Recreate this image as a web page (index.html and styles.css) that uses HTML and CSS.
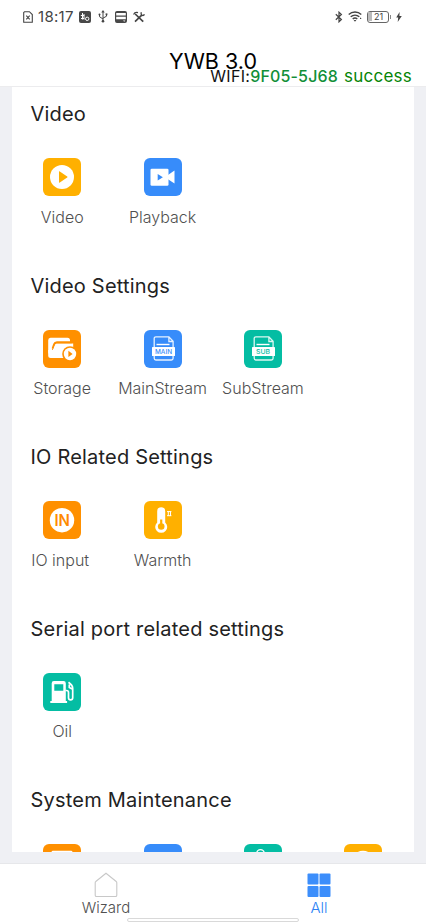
FILE: index.html
```html
<!DOCTYPE html>
<html lang="en">
<head>
<meta charset="utf-8">
<meta name="viewport" content="width=device-width, initial-scale=1">
<title>YWB 3.0</title>
<link rel="stylesheet" href="styles.css">
</head>
<body>
<div class="app">
  <header class="top">
    <div class="status">
      <svg class="s-sim" width="10" height="12" viewBox="0 0 10 12" fill="none" stroke="#444" stroke-width="1.1"><path d="M1.600.7h4.800l2.900 2.800v7.800H.7V1.600z"/><path d="M3.300 4.600l3.400 3.800M6.700 4.600l-3.400 3.800"/></svg>
      <span class="time">18:17</span>
      <svg class="s-app" width="12" height="12" viewBox="0 0 12 12"><rect width="12" height="12" rx="2" fill="#484848"/><path d="M3.500 2v6.500M1.800 4.500h3.400M5 3v5.500M2 7.500h3" stroke="#fff" fill="none"/><circle cx="8.200" cy="7.800" r="1.700" stroke="#fff" fill="none"/></svg>
      <svg class="s-usb" width="10" height="13" viewBox="0 0 10 13" fill="none" stroke="#444"><path d="M5 2v9M1.500 4.500v2.200L5 9M8.500 4v2.200L5 8.200"/><path d="M5 0l1.700 2.500H3.300z" fill="#444" stroke="none"/><circle cx="5" cy="11.300" r="1.300" fill="#444" stroke="none"/><circle cx="1.500" cy="4.400" r="1" fill="#444" stroke="none"/><path d="M7.600 3.400h1.800v1.800H7.600z" fill="#444" stroke="none"/></svg>
      <svg class="s-card" width="12" height="12" viewBox="0 0 12 12"><path d="M2 .6h8A1.400 1.400 0 0 1 11.400 2v8a1.400 1.400 0 0 1-1.400 1.400H2A1.400 1.400 0 0 1 .6 10V2A1.400 1.400 0 0 1 2 .6z" fill="#fff" stroke="#484848" stroke-width="1.200"/><path d="M.6 5.200h10.800M.6 8.800h10.800" stroke="#484848" stroke-width="1.300"/><path d="M1 9h10v2H1zM1 1h10v1H1z" fill="#484848"/><path d="M8 9.400h2.400L9.200 10.800z" fill="#fff"/></svg>
      <svg class="s-tool" width="12" height="12" viewBox="0 0 12 12" fill="none" stroke="#444"><path d="M2.200 3l8 7.600" stroke-width="1.700"/><path d="M9 3.800L2 10.600" stroke-width="1.700"/><path d="M.5 3.600C1.500 1.400 3 1 5 1.600M8.400 1.300c-.7 1.600 0 3 1.500 3.200.8 0 1.300-.5 1.500-1.200" stroke-width="1.300"/></svg>
      <span class="grow"></span>
      <svg class="s-bt" width="8" height="12" viewBox="0 0 8 12" fill="none" stroke="#444" stroke-width="1.200"><path d="M.8 3.200l5.600 5.300L4 10.800V1.200l2.400 2.200L.8 8.800"/></svg>
      <svg class="s-wifi" width="15" height="11" viewBox="0 0 15 11" fill="none" stroke="#444" stroke-width="1.400"><path d="M.7 3.400c3.600-3.300 9-3.300 12.600 0M2.700 5.800c2.500-2.200 6.100-2.200 8.600 0M4.700 8c1.400-1.200 3.200-1.200 4.600 0"/><path d="M5.600 9l1.400 1.800L8.400 9zM12 6.200l1.700 1.900H12z" fill="#444" stroke="none"/></svg>
      <span class="battery"><i></i><b>21</b></span>
      <svg class="s-bolt" width="6" height="10" viewBox="0 0 6 10"><path d="M3.600 0L.2 5.500h2L1.700 10 5.800 4.100H3.400z" fill="#444"/></svg>
    </div>
    <h1 class="title">YWB 3.0</h1>
    <p class="wifi"><span class="wifi-key">WIFI:</span><span class="wifi-id">9F05-5J68</span><span class="wifi-state">success</span></p>
  </header>

  <main class="page">
    <div class="sheet">
      <section class="group">
        <h2>Video</h2>
        <div class="grid">
          <div class="item"><span class="tile amber"><svg viewBox="0 0 38 38"><circle cx="19" cy="19" r="12" fill="#fff"/><path d="M16 13.800v10.400a.5.5 0 0 0 .8.4l7.400-5.100a.6.6 0 0 0 0-1l-7.400-5.100a.5.5 0 0 0-.8.4z" fill="#ffb000"/></svg></span><span class="label">Video</span></div>
          <div class="item"><span class="tile blue"><svg viewBox="0 0 38 38"><rect x="6.500" y="10.700" width="18" height="17" rx="1.300" fill="#fff"/><path d="M24 17l6.500-4.400v12.800L24 21.300z" fill="#fff"/><path d="M13.700 16v6.600l5.200-3.300z" fill="#378cfa"/></svg></span><span class="label">Playback</span></div>
        </div>
      </section>
      <section class="group">
        <h2>Video Settings</h2>
        <div class="grid">
          <div class="item"><span class="tile orange"><svg viewBox="0 0 38 38"><path d="M7.500 7.700h17a2.500 2.500 0 0 1 2.500 2.500v1.400H14.300c-1.800 0-2.600.8-3.200 2.400L7.200 24.500c-1-.4-2-1-2-2.500V10.200a2.500 2.500 0 0 1 2.300-2.500z" fill="#fff"/><path d="M14.500 13.500h15.700v6L21 28H9.300c-1.700 0-2.300-.9-1.800-2.400l4-10.200c.5-1.300 1.400-1.900 3-1.900z" fill="#fff"/><path d="M5.200 22v3.500a2.500 2.500 0 0 0 2.500 2.500H12V20H5.200z" fill="#fff"/><path d="M9.500 18.500l1.600-4.300c.5-1.200 1.400-1.800 2.700-1.800h15" fill="none" stroke="#ff9000" stroke-width="1.800"/><circle cx="27" cy="24" r="7.800" fill="#ff9000"/><circle cx="27" cy="24" r="6.200" fill="#fff"/><path d="M25.400 20.800v6.200l4.200-3.100z" fill="#ff9000"/></svg></span><span class="label">Storage</span></div>
          <div class="item"><span class="tile blue"><svg viewBox="0 0 38 38"><path d="M10.200 17V8.500a1.700 1.700 0 0 1 1.700-1.700h13l4.200 4.500V17M10.200 25v3.300a1.700 1.700 0 0 0 1.700 1.700h15.500a1.700 1.700 0 0 0 1.700-1.700V25M24.900 7v4.500h4" fill="none" stroke="#e6f1ff" stroke-width="1.300"/><path d="M12.500 14.500h13" stroke="#fff" stroke-width="1.400"/><rect x="8" y="17" width="23" height="9" rx=".6" fill="#fff"/><text class="doc-tag" x="19.500" y="24" fill="#378cfa" textLength="17" lengthAdjust="spacingAndGlyphs">MAIN</text></svg></span><span class="label">MainStream</span></div>
          <div class="item"><span class="tile teal"><svg viewBox="0 0 38 38"><path d="M10.200 17V8.500a1.700 1.700 0 0 1 1.700-1.700h13l4.200 4.500V17M10.200 25v3.300a1.700 1.700 0 0 0 1.700 1.700h15.500a1.700 1.700 0 0 0 1.700-1.700V25M24.900 7v4.500h4" fill="none" stroke="#dcf7f2" stroke-width="1.300"/><path d="M12.500 14.500h13" stroke="#fff" stroke-width="1.400"/><rect x="8" y="17" width="23" height="9" rx=".6" fill="#fff"/><text class="doc-tag" x="19" y="24" fill="#04bda3" textLength="14" lengthAdjust="spacingAndGlyphs">SUB</text></svg></span><span class="label">SubStream</span></div>
        </div>
      </section>
      <section class="group">
        <h2>IO Related Settings</h2>
        <div class="grid">
          <div class="item"><span class="tile orange"><svg viewBox="0 0 38 38"><circle cx="19" cy="19.200" r="12.200" fill="#fff"/><text class="in-tag" x="19.200" y="25" fill="#ff8a00" textLength="15.500" lengthAdjust="spacingAndGlyphs">IN</text></svg></span><span class="label io">IO input</span></div>
          <div class="item"><span class="tile amber"><svg viewBox="0 0 38 38"><path d="M13.200 10.200a4 4 0 0 1 8 0v11.200a6 6 0 1 1-8 0z" fill="#fff"/><path d="M17.200 18.500v6.500" stroke="#ffb000" stroke-width="2.200"/><circle cx="17.200" cy="25.500" r="3.300" fill="#ffb000"/><path d="M23 10.600h4.400M23 14.700h4.400M24.300 10.500v4.500M26.500 10.500v4.500" stroke="#fff" stroke-width="1"/></svg></span><span class="label">Warmth</span></div>
        </div>
      </section>
      <section class="group">
        <h2>Serial port related settings</h2>
        <div class="grid">
          <div class="item"><span class="tile teal"><svg viewBox="0 0 38 38"><path d="M8.700 28V10.200A2.200 2.200 0 0 1 10.900 8h9.700a2.200 2.200 0 0 1 2.200 2.200V28h1.300v2H7.300v-2zM11.300 11.200v6.500h9v-6.500z" fill="#fff" fill-rule="evenodd"/><path d="M22.500 17.500h1c1.400 0 2 .7 2 2v5.300c0 2.800 4.200 2.800 4.200 0v-9.600c0-2.200-1.500-4-4.200-6M26.300 11.500v3l3 1.500" fill="none" stroke="#fff" stroke-width="1.700"/></svg></span><span class="label">Oil</span></div>
        </div>
      </section>
      <section class="group">
        <h2>System Maintenance</h2>
        <div class="grid">
          <div class="item"><span class="tile orange"><svg viewBox="0 0 38 38"><rect x="8.500" y="6.700" width="21" height="22" rx="1.500" fill="#fff"/></svg></span></div>
          <div class="item"><span class="tile blue"></span></div>
          <div class="item"><span class="tile teal"><svg viewBox="0 0 38 38"><circle cx="16.500" cy="9.500" r="3.800" fill="none" stroke="#fff" stroke-width="1.300"/></svg></span></div>
          <div class="item"><span class="tile amber"><svg viewBox="0 0 38 38"><circle cx="19" cy="18.500" r="11.700" fill="#fff"/></svg></span></div>
        </div>
      </section>
    </div>
  </main>

  <nav class="tabs">
    <div class="tab"><svg width="24" height="26" viewBox="0 0 24 26" fill="none" stroke="#c8c8c8" stroke-width="1.100"><path d="M12 1.200L1.800 9.500a1.500 1.500 0 0 0-.6 1.200v12.500A1.300 1.300 0 0 0 2.500 24.500h19a1.300 1.300 0 0 0 1.300-1.300V10.700a1.500 1.500 0 0 0-.6-1.200z"/></svg><span>Wizard</span></div>
    <div class="tab active"><svg width="24" height="26" viewBox="0 0 24 26" fill="#3c8efb"><rect x=".5" y="1.500" width="11" height="11" rx="1"/><rect x="12.500" y="1.500" width="11" height="11" rx="1"/><rect x=".5" y="14" width="11" height="11" rx="1"/><rect x="12.500" y="14" width="11" height="11" rx="1"/></svg><span>All</span></div>
    <i class="gesture"></i>
  </nav>
</div>
</body>
</html>
```
FILE: styles.css
```css
* { box-sizing: border-box; }
body { margin: 0; background: #fff; font-family: Inter, "Noto Sans", sans-serif; }
h1, h2, p { margin: 0; }
svg { display: block; flex: none; }
.app { height: 923px; display: flex; flex-direction: column; overflow: hidden; }

.top { height: 87px; flex: none; border-bottom: 1px solid #ececee; position: relative; }
.status { height: 33px; padding: 0 24px 0 23px; display: flex; align-items: center; color: #444; }
.time { font-size: 15px; line-height: 18px; margin: 0 4px 0 5px; letter-spacing: .3px; white-space: nowrap; width: 37px; }
.s-usb { margin-left: 7px; }
.s-card { margin-left: 7px; }
.s-tool { margin-left: 6px; }
.grow { flex: 1; }
.s-wifi { margin-left: 5px; }
.battery { width: 22px; height: 12px; margin-left: 4px; border: 1px solid #666; border-radius: 3px; display: flex; align-items: center; position: relative; }
.battery i { width: 4px; height: 9px; background: #bbb; }
.battery b { font-size: 9px; line-height: 10px; font-weight: 400; margin-left: 2px; }
.battery::after { content: ""; position: absolute; right: -3px; top: 3px; width: 1px; height: 4px; background: #888; }
.s-bolt { margin-left: 7px; }
.title { text-align: center; font-size: 21.5px; line-height: 28px; margin-top: 14px; font-weight: 400; color: #000; }
.wifi { position: absolute; right: 14px; top: 66px; display: flex; font-size: 16px; line-height: 20px; }
.wifi-key { color: #111; letter-spacing: .3px; }
.wifi-id { color: #128f38; font-weight: 500; letter-spacing: .15px; }
.wifi-state { color: #078507; margin-left: 6px; font-size: 17px; letter-spacing: .25px; }

.page { flex: 1; min-height: 0; background: #eff0f4; padding: 0 12px 11px; }
.sheet { height: 100%; background: #fff; overflow: hidden; }
.group { height: 171.600px; padding-top: 14px; }
.group h2 { font-size: 20px; line-height: 26px; font-weight: 400; letter-spacing: .2px; color: #222; padding-left: 18.500px; white-space: nowrap; }
.grid { display: grid; grid-template-columns: repeat(4, 100.400px); margin-top: 31px; }
.item { display: flex; flex-direction: column; align-items: center; }
.tile { width: 38px; height: 38px; border-radius: 6px; }
.amber { background: #ffb000; }
.blue { background: #378cfa; }
.orange { background: #ff9000; }
.teal { background: #04bda3; }
.label { font-size: 16px; line-height: 20px; margin-top: 10.500px; color: #505050; font-weight: 300; white-space: nowrap; }
.io { margin-right: 4px; }
.doc-tag { font: 500 6.500px Inter, sans-serif; text-anchor: middle; }
.in-tag { font: 600 16px Inter, sans-serif; text-anchor: middle; }

.tabs { height: 60px; flex: none; border-top: 1px solid #e6e7ea; display: grid; grid-template-columns: 1fr 1fr; position: relative; }
.tab { display: flex; flex-direction: column; align-items: center; padding-top: 8px; font-size: 15px; line-height: 20px; color: #505050; font-weight: 300; }
.tab span { margin-left: -1px; }
.tab svg { margin-left: -1px; }
.tab.active { color: #2c82f5; }
.gesture { position: absolute; left: 127px; bottom: 1px; width: 172px; height: 4px; border: 1px solid #d9d9d9; border-radius: 2px; background: #fff; }
```
